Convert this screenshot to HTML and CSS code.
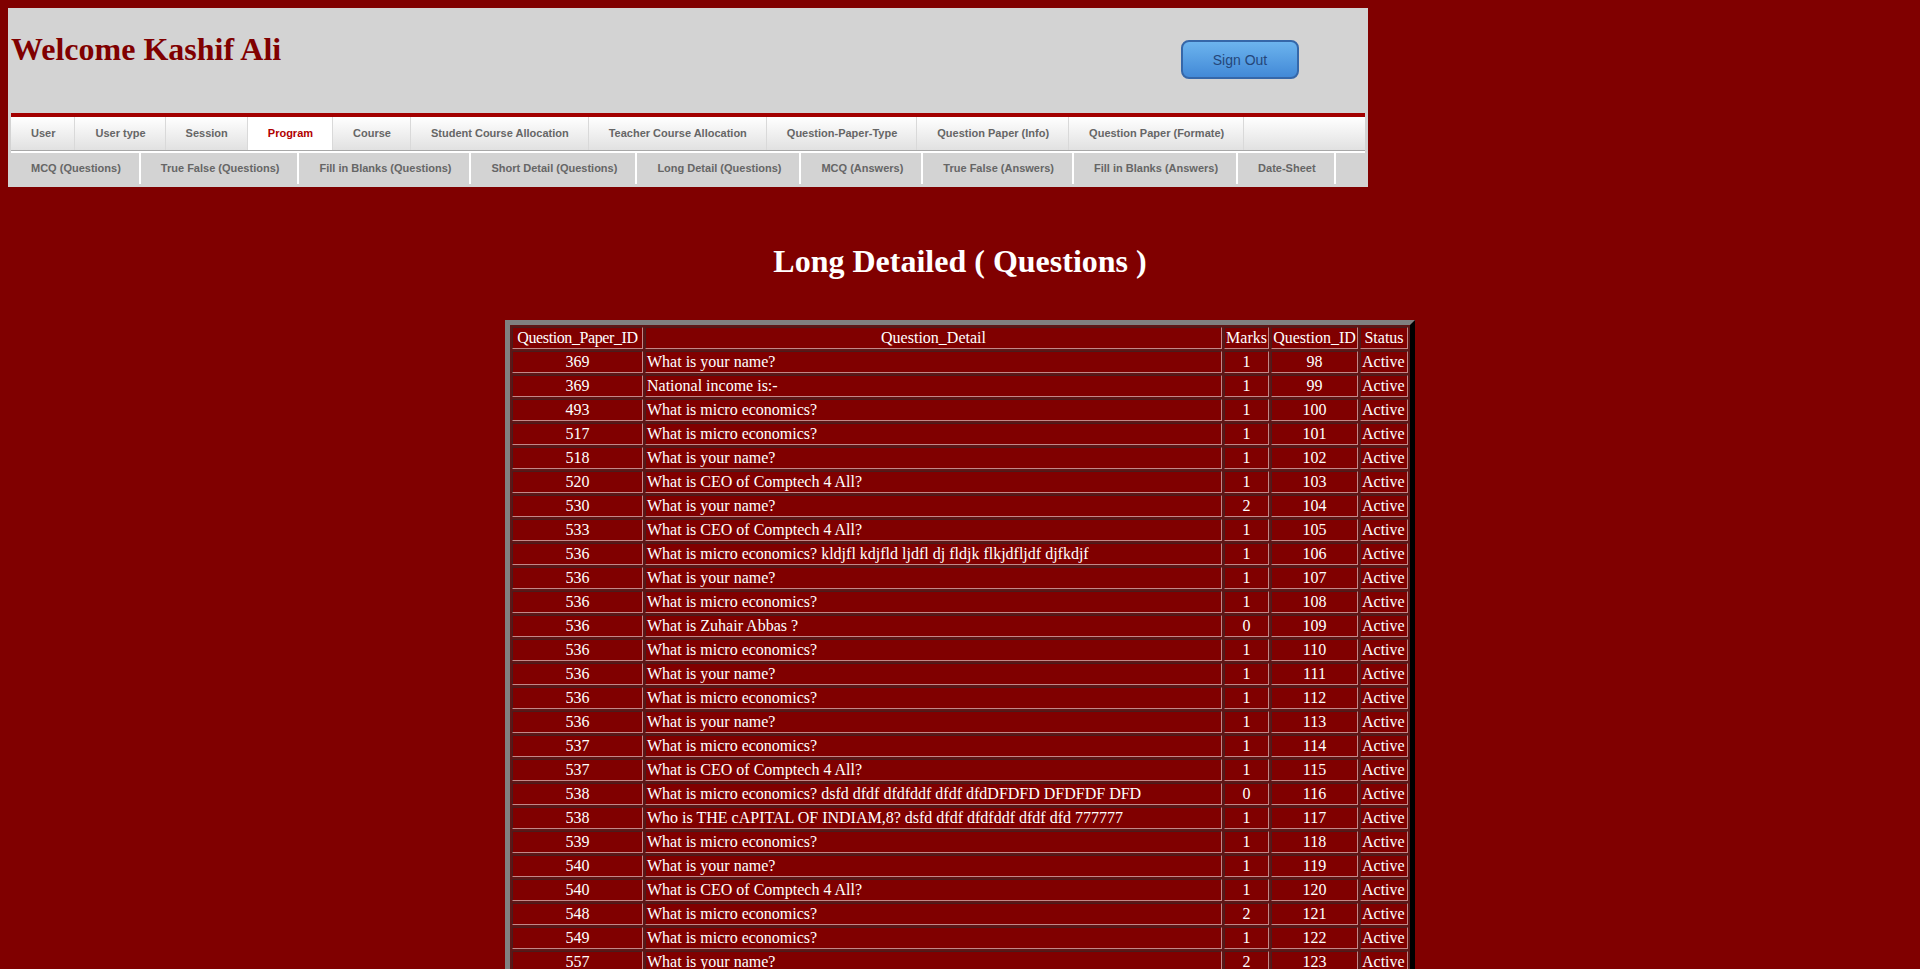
FILE: index.html
```html
<!DOCTYPE html>
<html>
<head>
<meta charset="utf-8">
<title>Long Detailed ( Questions )</title>
<link rel="stylesheet" href="styles.css">
</head>
<body>
<div class="header">
  <div class="top">
    <h1 class="welcome">Welcome Kashif Ali</h1>
    <button class="signout">Sign Out</button>
  </div>
  <div class="menu">
    <ul class="row1">
      <li>User</li>
      <li>User type</li>
      <li>Session</li>
      <li class="active">Program</li>
      <li>Course</li>
      <li>Student Course Allocation</li>
      <li>Teacher Course Allocation</li>
      <li>Question-Paper-Type</li>
      <li>Question Paper (Info)</li>
      <li>Question Paper (Formate)</li>
    </ul>
    <ul class="row2">
      <li>MCQ (Questions)</li>
      <li>True False (Questions)</li>
      <li>Fill in Blanks (Questions)</li>
      <li>Short Detail (Questions)</li>
      <li>Long Detail (Questions)</li>
      <li>MCQ (Answers)</li>
      <li>True False (Answers)</li>
      <li>Fill in Blanks (Answers)</li>
      <li>Date-Sheet</li>
    </ul>
  </div>
</div>

<h2 class="title">Long Detailed ( Questions )</h2>

<table class="grid">
  <thead>
    <tr>
      <th class="c1 tight">Question_Paper_ID</th>
      <th class="c2">Question_Detail</th>
      <th class="c3">Marks</th>
      <th class="c4">Question_ID</th>
      <th class="c5">Status</th>
    </tr>
  </thead>
  <tbody>
    <tr><td class="num">369</td><td>What is your name?</td><td class="num">1</td><td class="num">98</td><td>Active</td></tr>
    <tr><td class="num">369</td><td>National income is:-</td><td class="num">1</td><td class="num">99</td><td>Active</td></tr>
    <tr><td class="num">493</td><td>What is micro economics?</td><td class="num">1</td><td class="num">100</td><td>Active</td></tr>
    <tr><td class="num">517</td><td>What is micro economics?</td><td class="num">1</td><td class="num">101</td><td>Active</td></tr>
    <tr><td class="num">518</td><td>What is your name?</td><td class="num">1</td><td class="num">102</td><td>Active</td></tr>
    <tr><td class="num">520</td><td>What is CEO of Comptech 4 All?</td><td class="num">1</td><td class="num">103</td><td>Active</td></tr>
    <tr><td class="num">530</td><td>What is your name?</td><td class="num">2</td><td class="num">104</td><td>Active</td></tr>
    <tr><td class="num">533</td><td>What is CEO of Comptech 4 All?</td><td class="num">1</td><td class="num">105</td><td>Active</td></tr>
    <tr><td class="num">536</td><td>What is micro economics? kldjfl kdjfld ljdfl dj fldjk flkjdfljdf djfkdjf</td><td class="num">1</td><td class="num">106</td><td>Active</td></tr>
    <tr><td class="num">536</td><td>What is your name?</td><td class="num">1</td><td class="num">107</td><td>Active</td></tr>
    <tr><td class="num">536</td><td>What is micro economics?</td><td class="num">1</td><td class="num">108</td><td>Active</td></tr>
    <tr><td class="num">536</td><td>What is Zuhair Abbas ?</td><td class="num">0</td><td class="num">109</td><td>Active</td></tr>
    <tr><td class="num">536</td><td>What is micro economics?</td><td class="num">1</td><td class="num">110</td><td>Active</td></tr>
    <tr><td class="num">536</td><td>What is your name?</td><td class="num">1</td><td class="num">111</td><td>Active</td></tr>
    <tr><td class="num">536</td><td>What is micro economics?</td><td class="num">1</td><td class="num">112</td><td>Active</td></tr>
    <tr><td class="num">536</td><td>What is your name?</td><td class="num">1</td><td class="num">113</td><td>Active</td></tr>
    <tr><td class="num">537</td><td>What is micro economics?</td><td class="num">1</td><td class="num">114</td><td>Active</td></tr>
    <tr><td class="num">537</td><td>What is CEO of Comptech 4 All?</td><td class="num">1</td><td class="num">115</td><td>Active</td></tr>
    <tr><td class="num">538</td><td>What is micro economics? dsfd dfdf dfdfddf dfdf dfdDFDFD DFDFDF DFD</td><td class="num">0</td><td class="num">116</td><td>Active</td></tr>
    <tr><td class="num">538</td><td>Who is THE cAPITAL OF INDIAM,8? dsfd dfdf dfdfddf dfdf dfd 777777</td><td class="num">1</td><td class="num">117</td><td>Active</td></tr>
    <tr><td class="num">539</td><td>What is micro economics?</td><td class="num">1</td><td class="num">118</td><td>Active</td></tr>
    <tr><td class="num">540</td><td>What is your name?</td><td class="num">1</td><td class="num">119</td><td>Active</td></tr>
    <tr><td class="num">540</td><td>What is CEO of Comptech 4 All?</td><td class="num">1</td><td class="num">120</td><td>Active</td></tr>
    <tr><td class="num">548</td><td>What is micro economics?</td><td class="num">2</td><td class="num">121</td><td>Active</td></tr>
    <tr><td class="num">549</td><td>What is micro economics?</td><td class="num">1</td><td class="num">122</td><td>Active</td></tr>
    <tr><td class="num">557</td><td>What is your name?</td><td class="num">2</td><td class="num">123</td><td>Active</td></tr>
  </tbody>
</table>
</body>
</html>
```

FILE: styles.css
```css
html, body {
  background: #800000;
}
body {
  margin: 8px;
  font-family: "Liberation Serif", "Times New Roman", serif;
}

/* ---------- header box ---------- */
.header {
  width: 1360px;
  height: 179px;
  background: #d3d3d3;
}
.top {
  display: flex;
  justify-content: space-between;
  align-items: flex-start;
  height: 105px;
  padding-left: 3px;
}
.welcome {
  margin: 23px 0 0;
  font: bold 32px/36px "Liberation Serif", "Times New Roman", serif;
  color: #800000;
}
.signout {
  margin: 32px 69px 0 0;
  width: 118px;
  height: 39px;
  border: 2px solid #3567a9;
  border-radius: 8px;
  background: linear-gradient(#6cb4ee, #4289d7);
  color: #25477a;
  font: 14px "Liberation Sans", Arial, sans-serif;
  padding: 0;
}

/* ---------- menu ---------- */
.menu {
  margin: 0 3px;
  border-top: 4px solid #a30000;
}
.menu ul {
  list-style: none;
  margin: 0;
  padding: 0;
  display: flex;
  font: bold 11px "Liberation Sans", Arial, sans-serif;
  color: #666;
}
.row1 {
  height: 33px;
  border-bottom: 1px solid #a8a8a8;
  background: linear-gradient(#ffffff, #e1e1e1);
}
.row1 li {
  padding: 0 19px 0 20px;
  border-right: 1px solid #d9d9d9;
  line-height: 33px;
}
.row1 li.active {
  background: #fff;
  color: #b00000;
}
.row2 {
  height: 31px;
  border-top: 2px solid #fff;
}
.row2 li {
  padding: 0 18px 0 20px;
  border-right: 2px solid #fff;
  line-height: 31px;
}

/* ---------- title ---------- */
.title {
  margin: 56px 0 41px;
  text-align: center;
  font: bold 32px/36px "Liberation Serif", "Times New Roman", serif;
  color: #fff;
}

/* ---------- grid ---------- */
.grid {
  box-sizing: border-box;
  width: 910px;
  margin: 0 auto;
  table-layout: fixed;
  border-collapse: separate;
  border-spacing: 2px;
  border: 5px outset #808080;
  border-color: #808080 #3a3a3a #3a3a3a #808080;
  background: #5e1616;
  color: #fff;
  font: 16px/18px "Liberation Serif", "Times New Roman", serif;
}
.grid th,
.grid td {
  box-sizing: border-box;
  padding: 1px;
  background: #800000;
  border-style: solid;
  border-width: 1px;
  border-color: #4a1c1c #c48787 #c48787 #4a1c1c;
  white-space: nowrap;
  text-align: left;
}
.grid th {
  font-weight: normal;
  text-align: center;
}
.grid td.num {
  text-align: center;
}
.c1 { width: 131px; }
.c2 { width: 577px; }
.c3 { width: 45px; }
.c4 { width: 87px; }
.c5 { width: 48px; }
.tight {
  letter-spacing: -0.4px;
}
```
